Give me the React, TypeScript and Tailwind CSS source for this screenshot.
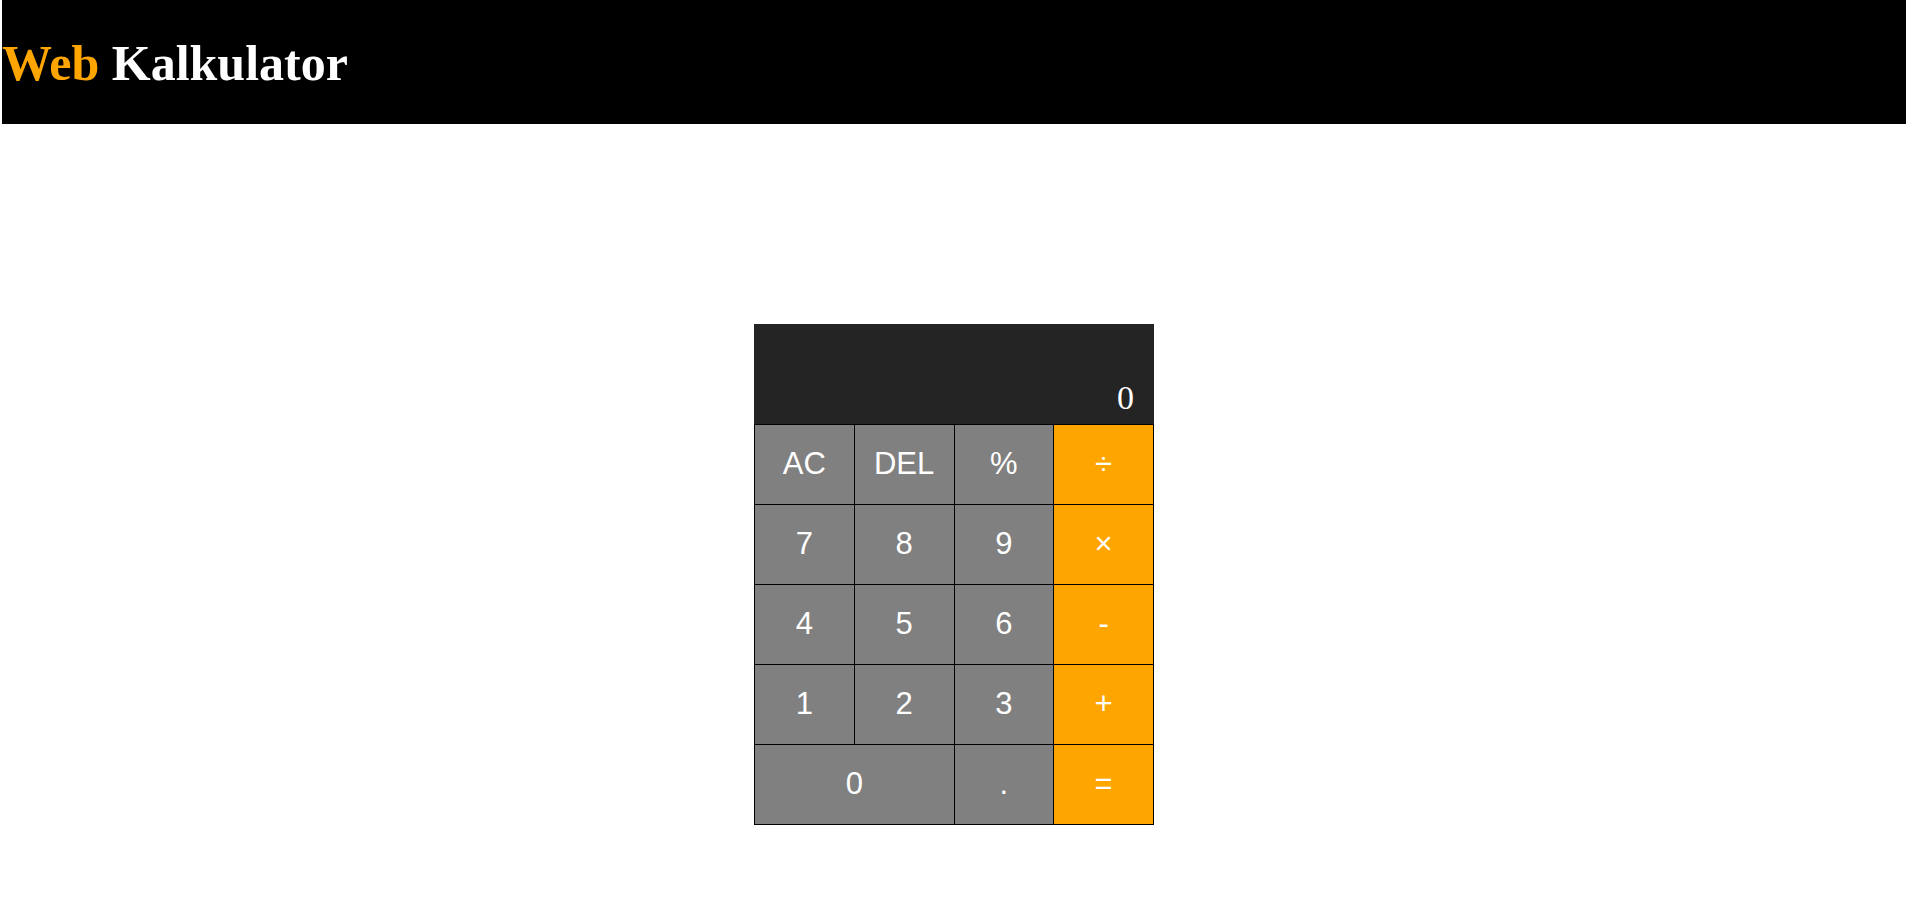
const keys: { label: string; op?: boolean; wide?: boolean }[] = [
  { label: "AC" },
  { label: "DEL" },
  { label: "%" },
  { label: "÷", op: true },
  { label: "7" },
  { label: "8" },
  { label: "9" },
  { label: "×", op: true },
  { label: "4" },
  { label: "5" },
  { label: "6" },
  { label: "-", op: true },
  { label: "1" },
  { label: "2" },
  { label: "3" },
  { label: "+", op: true },
  { label: "0", wide: true },
  { label: "." },
  { label: "=", op: true },
];

export default function App() {
  return (
    <div className="min-h-screen bg-white">
      {/* Header */}
      <header className="mx-[2px] h-[124px] bg-black flex items-center pt-[2px]">
        <h1 className="text-[50px] font-bold leading-none" style={{ fontFamily: '"Liberation Serif", serif' }}>
          <span className="text-[#ffa500]">Web</span> <span className="text-white">Kalkulator</span>
        </h1>
      </header>

      {/* Calculator */}
      <div className="flex justify-center pt-[200px]">
        <div className="w-[400px]">
          <div
            className="h-[100px] bg-[#242424] text-white text-[34px] leading-none flex items-end justify-end px-[20px] pb-[9px]"
            style={{ fontFamily: '"Liberation Serif", serif' }}
          >
            0
          </div>
          <div
            className="grid grid-cols-4 auto-rows-[79px] gap-px bg-black border border-black"
            style={{ fontFamily: '"Liberation Sans", Arial, sans-serif' }}
          >
            {keys.map((k) => (
              <button
                key={k.label}
                className={`flex items-center justify-center text-white text-[31px] ${
                  k.op ? "bg-[#ffa500]" : "bg-[#808080]"
                } ${k.wide ? "col-span-2" : ""}`}
              >
                {k.label}
              </button>
            ))}
          </div>
        </div>
      </div>
    </div>
  );
}
